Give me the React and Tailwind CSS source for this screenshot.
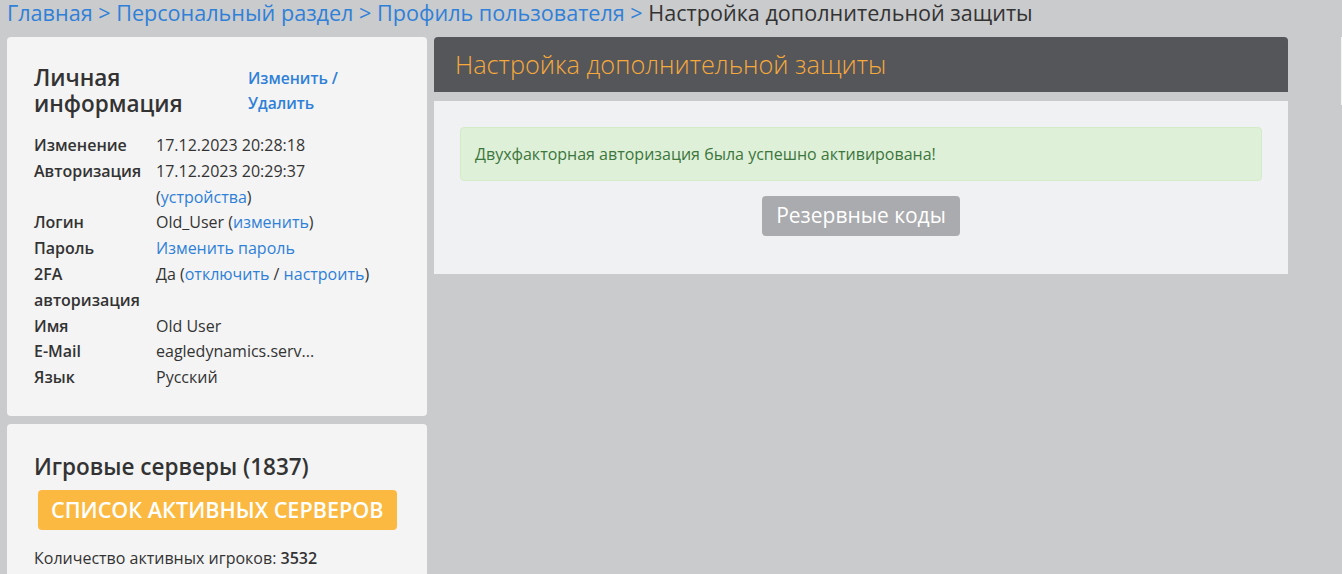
import React from "react";

const FONT = { fontFamily: '"Open Sans", "Noto Sans", sans-serif' };

const rows = [
  ["Изменение", <>17.12.2023 20:28:18</>],
  [
    "Авторизация",
    <>
      17.12.2023 20:29:37 (<a className="text-[#2f80d8]">устройства</a>)
    </>,
  ],
  [
    "Логин",
    <>
      Old_User (<a className="text-[#2f80d8]">изменить</a>)
    </>,
  ],
  ["Пароль", <a className="text-[#2f80d8]">Изменить пароль</a>],
  [
    "2FA авторизация",
    <>
      Да (<a className="text-[#2f80d8]">отключить</a> / <a className="text-[#2f80d8]">настроить</a>)
    </>,
  ],
  ["Имя", <>Old User</>],
  ["E-Mail", <>eagledynamics.serv...</>],
  ["Язык", <>Русский</>],
];

function InfoCard() {
  return (
    <div className="bg-[#f4f4f4] rounded-[4px] pl-[27px] pr-4 pt-[28px] pb-[25px]">
      <div className="flex">
        <h2 className="w-[214px] text-[22.5px] leading-[26px] font-semibold text-[#333]">Личная информация</h2>
        <div className="w-[110px] text-[15.6px] leading-[25px] font-semibold text-[#2f80d8] pt-[1px]">
          Изменить / Удалить
        </div>
      </div>
      <div className="mt-[16px] text-[16px] leading-[25.8px] text-[#333]">
        {rows.map(([label, value]) => (
          <div key={label} className="flex">
            <div className="w-[122px] shrink-0 font-semibold pr-2">{label}</div>
            <div className="w-[240px]">{value}</div>
          </div>
        ))}
      </div>
    </div>
  );
}

function ServersCard() {
  return (
    <div className="bg-[#f4f4f4] rounded-[4px] pl-[27px] pr-4 pt-[29px] pb-6">
      <h2 className="text-[22.5px] leading-[28px] font-semibold text-[#333]">Игровые серверы (1837)</h2>
      <button className="mt-[9px] ml-[4px] h-10 px-[13px] bg-[#fbb941] rounded-[4px] text-white text-[21.6px] font-semibold uppercase">
        Список активных серверов
      </button>
      <p className="mt-[16px] text-[16px] text-[#333]">
        Количество активных игроков: <b className="font-semibold">3532</b>
      </p>
    </div>
  );
}

export default function App() {
  return (
    <div className="h-[574px] w-[1342px] overflow-hidden bg-[#cacbcd]" style={FONT}>
      <div className="pl-[7px] text-[21.6px] leading-[26px] text-[#2f80d8] whitespace-nowrap">
        <a>Главная</a> &gt; <a>Персональный раздел</a> &gt; <a>Профиль пользователя</a> &gt;{" "}
        <span className="text-[#333]">Настройка дополнительной защиты</span>
      </div>
      <div className="flex gap-[7px] pl-[7px] mt-[11px]">
        <div className="w-[420px] shrink-0 flex flex-col gap-2">
          <InfoCard />
          <ServersCard />
        </div>
        <div className="w-[854px] shrink-0">
          <div className="h-[55px] bg-[#555659] rounded-t-[4px] flex items-center pl-[21px]">
            <h1 className="text-[25.3px] font-light text-[#f7a93c]">Настройка дополнительной защиты</h1>
          </div>
          <div className="mt-[9px] bg-[#f0f1f3] px-[26px] pt-[26px] pb-[38px]">
            <div className="h-[54px] flex items-center px-[14px] bg-[#dff0d8] border border-[#d4eac8] rounded-[4px] text-[16px] text-[#3c763d]">
              Двухфакторная авторизация была успешно активирована!
            </div>
            <div className="flex justify-center mt-[15px]">
              <button className="h-10 px-[14px] bg-[#aaabae] rounded-[4px] text-white text-[21px]">
                Резервные коды
              </button>
            </div>
          </div>
        </div>
        <div className="ml-[46px] w-10 h-[68px] shrink-0 bg-[#f4f4f4]" />
      </div>
    </div>
  );
}
